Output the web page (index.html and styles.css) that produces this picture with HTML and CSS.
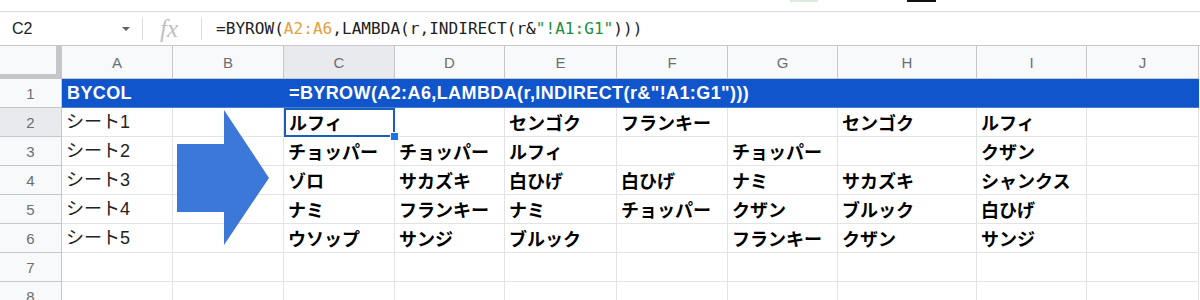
FILE: index.html
```html
<!DOCTYPE html>
<html lang="ja">
<head>
  <meta charset="UTF-8" />
  <title>BYROW - Sheet</title>
  <link rel="stylesheet" href="styles.css">
</head>
<body>
  <div class="toolbar">
    <span class="tool-green"></span>
    <span class="tool-black"></span>
  </div>

  <div class="formula-bar">
    <div class="name-box">
      <span>C2</span>
      <span class="caret"></span>
    </div>
    <div class="fx">fx</div>
    <div class="formula">=BYROW(<span class="ref">A2:A6</span>,LAMBDA(r,INDIRECT(r&amp;<span class="str">"!A1:G1"</span>)))</div>
  </div>

  <div class="sheet">
    <div class="corner"></div>
    <div class="col-head">A</div>
    <div class="col-head">B</div>
    <div class="col-head active">C</div>
    <div class="col-head">D</div>
    <div class="col-head">E</div>
    <div class="col-head">F</div>
    <div class="col-head">G</div>
    <div class="col-head">H</div>
    <div class="col-head">I</div>
    <div class="col-head">J</div>

    <div class="row-head">1</div>
    <div class="banner">
      <span class="banner-title">BYCOL</span>
      <span>=BYROW(A2:A6,LAMBDA(r,INDIRECT(r&amp;"!A1:G1")))</span>
    </div>

    <div class="row-head active">2</div>
    <div class="cell plain">シート1</div>
    <div class="cell"></div>
    <div class="cell selected">ルフィ<span class="handle"></span></div>
    <div class="cell"></div>
    <div class="cell">センゴク</div>
    <div class="cell">フランキー</div>
    <div class="cell"></div>
    <div class="cell">センゴク</div>
    <div class="cell">ルフィ</div>
    <div class="cell"></div>

    <div class="row-head">3</div>
    <div class="cell plain">シート2</div>
    <div class="cell"></div>
    <div class="cell">チョッパー</div>
    <div class="cell">チョッパー</div>
    <div class="cell">ルフィ</div>
    <div class="cell"></div>
    <div class="cell">チョッパー</div>
    <div class="cell"></div>
    <div class="cell">クザン</div>
    <div class="cell"></div>

    <div class="row-head">4</div>
    <div class="cell plain">シート3</div>
    <div class="cell"></div>
    <div class="cell">ゾロ</div>
    <div class="cell">サカズキ</div>
    <div class="cell">白ひげ</div>
    <div class="cell">白ひげ</div>
    <div class="cell">ナミ</div>
    <div class="cell">サカズキ</div>
    <div class="cell">シャンクス</div>
    <div class="cell"></div>

    <div class="row-head">5</div>
    <div class="cell plain">シート4</div>
    <div class="cell"></div>
    <div class="cell">ナミ</div>
    <div class="cell">フランキー</div>
    <div class="cell">ナミ</div>
    <div class="cell">チョッパー</div>
    <div class="cell">クザン</div>
    <div class="cell">ブルック</div>
    <div class="cell">白ひげ</div>
    <div class="cell"></div>

    <div class="row-head">6</div>
    <div class="cell plain">シート5</div>
    <div class="cell"></div>
    <div class="cell">ウソップ</div>
    <div class="cell">サンジ</div>
    <div class="cell">ブルック</div>
    <div class="cell"></div>
    <div class="cell">フランキー</div>
    <div class="cell">クザン</div>
    <div class="cell">サンジ</div>
    <div class="cell"></div>

    <div class="row-head">7</div>
    <div class="cell"></div><div class="cell"></div><div class="cell"></div><div class="cell"></div><div class="cell"></div>
    <div class="cell"></div><div class="cell"></div><div class="cell"></div><div class="cell"></div><div class="cell"></div>

    <div class="row-head">8</div>
    <div class="cell"></div><div class="cell"></div><div class="cell"></div><div class="cell"></div><div class="cell"></div>
    <div class="cell"></div><div class="cell"></div><div class="cell"></div><div class="cell"></div><div class="cell"></div>

    <!-- drawing floating over the grid -->
    <svg class="arrow" width="94" height="136" viewBox="0 0 94 136">
      <polygon points="0,34 47,34 47,0 92,68 47,135 47,102 0,102" fill="#3c78d8"/>
    </svg>
  </div>
</body>
</html>
```

FILE: styles.css
```css
* {
  margin: 0;
  padding: 0;
  box-sizing: border-box;
}

body {
  background: #ffffff;
  font-family: 'Liberation Sans', 'Noto Sans CJK JP', sans-serif;
  color: #000000;
  overflow: hidden;
  width: 1200px;
  height: 300px;
}

.toolbar {
  height: 12px;
  border-bottom: 1px solid #dadce0;
  display: flex;
  align-items: flex-start;
}

.tool-green {
  width: 28px;
  height: 2px;
  margin-left: 790px;
  background: #d7ecd9;
}

.tool-black {
  width: 29px;
  height: 2px;
  margin-left: 89px;
  background: #111111;
}

.formula-bar {
  height: 33px;
  display: flex;
  align-items: center;
}

.name-box {
  width: 143px;
  height: 22px;
  padding-left: 12px;
  padding-right: 12px;
  border-right: 1px solid #dadce0;
  display: flex;
  align-items: center;
  justify-content: space-between;
  font-size: 16px;
  color: #202124;
}

.caret {
  width: 0;
  height: 0;
  border-left: 4px solid transparent;
  border-right: 4px solid transparent;
  border-top: 4px solid #5f6368;
}

.fx {
  width: 59px;
  height: 22px;
  padding-left: 17px;
  border-right: 1px solid #dadce0;
  font-family: 'Liberation Serif', serif;
  font-style: italic;
  font-size: 25px;
  line-height: 22px;
  color: #bdc0c4;
}

.formula {
  padding-left: 14px;
  font-family: 'DejaVu Sans Mono', monospace;
  font-size: 16.1px;
  color: #202124;
  white-space: nowrap;
}

.formula .ref {
  color: #e1a23f;
}

.formula .str {
  color: #1e8e3e;
}

.sheet {
  position: relative;
  display: grid;
  grid-template-columns: 62px 111px 111px 111px 110px 112px 111px 110px 139px 110px 112px;
  grid-template-rows: 33px repeat(8, 29px);
  border-top: 1px solid #c7c7c7;
}

.corner {
  background: #f8f9fa;
  border-right: 6px solid #c4c6c8;
  border-bottom: 5px solid #c4c6c8;
}

.col-head {
  background: #f8f9fa;
  border-right: 1px solid #c7c7c7;
  border-bottom: 1px solid #c7c7c7;
  color: #6b6f73;
  font-size: 15px;
  display: flex;
  align-items: center;
  justify-content: center;
}

.col-head.active,
.row-head.active {
  background: #e8eaed;
}

.row-head {
  background: #f8f9fa;
  border-right: 1px solid #c7c7c7;
  border-bottom: 1px solid #c7c7c7;
  color: #6b6f73;
  font-size: 15px;
  display: flex;
  align-items: center;
  justify-content: center;
}

.banner {
  grid-column: 2 / span 10;
  background: #1155cc;
  border-bottom: 1px solid #4a7fd8;
  color: #ffffff;
  font-weight: bold;
  font-size: 18px;
  letter-spacing: 0.4px;
  display: flex;
  align-items: center;
  white-space: nowrap;
}

.banner-title {
  width: 227px;
  padding-left: 5px;
}

.cell {
  border-right: 1px solid #e2e3e3;
  border-bottom: 1px solid #e2e3e3;
  padding-left: 4px;
  font-family: 'Noto Sans CJK JP', sans-serif;
  font-weight: bold;
  font-size: 18px;
  line-height: 28px;
  white-space: nowrap;
  overflow: hidden;
}

.cell.plain {
  font-family: 'Liberation Sans', 'Noto Sans CJK JP', sans-serif;
  font-weight: normal;
  color: #222222;
}

.cell.selected {
  position: relative;
  overflow: visible;
  border: 2px solid #1a5fb4;
  padding-left: 3px;
  line-height: 25px;
}

.handle {
  position: absolute;
  right: -6px;
  bottom: -6px;
  width: 9px;
  height: 9px;
  background: #1a73e8;
  border: 1px solid #ffffff;
}

.arrow {
  position: absolute;
  left: 177px;
  top: 64px;
}
```
